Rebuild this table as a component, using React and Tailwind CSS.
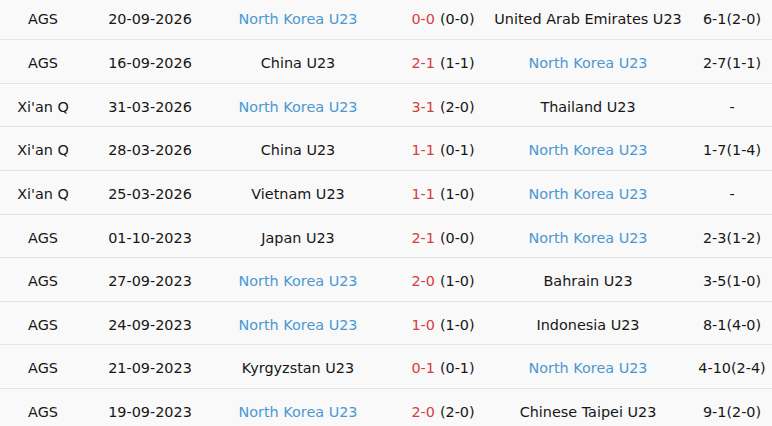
import React from "react";

const rows = [
  ["AGS", "20-09-2026", "North Korea U23", true, "0-0", "(0-0)", "United Arab Emirates U23", false, "6-1(2-0)"],
  ["AGS", "16-09-2026", "China U23", false, "2-1", "(1-1)", "North Korea U23", true, "2-7(1-1)"],
  ["Xi'an Q", "31-03-2026", "North Korea U23", true, "3-1", "(2-0)", "Thailand U23", false, "-"],
  ["Xi'an Q", "28-03-2026", "China U23", false, "1-1", "(0-1)", "North Korea U23", true, "1-7(1-4)"],
  ["Xi'an Q", "25-03-2026", "Vietnam U23", false, "1-1", "(1-0)", "North Korea U23", true, "-"],
  ["AGS", "01-10-2023", "Japan U23", false, "2-1", "(0-0)", "North Korea U23", true, "2-3(1-2)"],
  ["AGS", "27-09-2023", "North Korea U23", true, "2-0", "(1-0)", "Bahrain U23", false, "3-5(1-0)"],
  ["AGS", "24-09-2023", "North Korea U23", true, "1-0", "(1-0)", "Indonesia U23", false, "8-1(4-0)"],
  ["AGS", "21-09-2023", "Kyrgyzstan U23", false, "0-1", "(0-1)", "North Korea U23", true, "4-10(2-4)"],
  ["AGS", "19-09-2023", "North Korea U23", true, "2-0", "(2-0)", "Chinese Taipei U23", false, "9-1(2-0)"],
];

function Cell({ children, className = "" }) {
  return (
    <div className={"flex items-center justify-center whitespace-nowrap pt-[5px] " + className}>
      {children}
    </div>
  );
}

export default function App() {
  return (
    <div
      className="w-[772px] h-[426px] overflow-hidden bg-[#f9f9f9] text-[#161616] text-[14.4px]"
      style={{ fontFamily: '"DejaVu Sans", Verdana, sans-serif' }}
    >
      <div className="mt-[-3.6px]">
        {rows.map((r, i) => (
          <div
            key={i}
            className="grid grid-cols-[86px_128px_168px_122px_168px_100px] h-[43.625px] border-b border-[#e4e4e4]"
          >
            <Cell>{r[0]}</Cell>
            <Cell>{r[1]}</Cell>
            <Cell className={r[3] ? "text-[#4a98d3]" : ""}>{r[2]}</Cell>
            <Cell>
              <span className="text-[#d2403f]">{r[4]}</span>
              <span className="ml-[5px]">{r[5]}</span>
            </Cell>
            <Cell className={r[7] ? "text-[#4a98d3]" : ""}>{r[6]}</Cell>
            <Cell className="pl-[20px]">{r[8]}</Cell>
          </div>
        ))}
      </div>
    </div>
  );
}
